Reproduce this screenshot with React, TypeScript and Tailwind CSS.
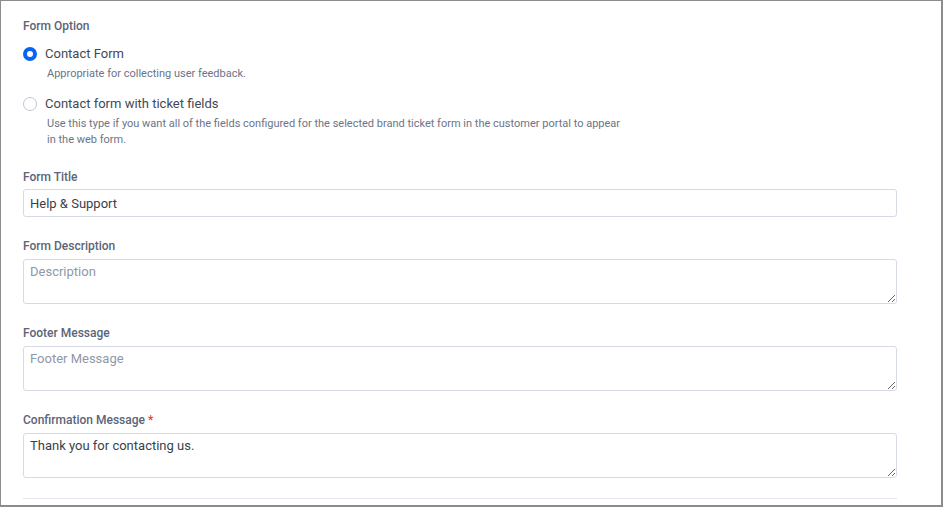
import React from "react";

const labelCls = "block text-[12px] leading-[16px] font-medium text-[#5b6478]";
const fieldCls =
  "block w-full rounded-[3px] border border-[#d5dae4] bg-white px-[6px] text-[13px] leading-[20px] text-[#3a3f4b] placeholder:text-[#8f98a8] outline-none";

function Radio({ checked }: { checked: boolean }) {
  return checked ? (
    <span className="inline-block h-[14px] w-[14px] shrink-0 rounded-full border-[4px] border-[#0b63f3] bg-white" />
  ) : (
    <span className="inline-block h-[14px] w-[14px] shrink-0 rounded-full border-[1.5px] border-[#bfc6d2] bg-white" />
  );
}

export default function App() {
  return (
    <div
      className="h-[507px] w-[943px] overflow-hidden border-t border-l border-r-2 border-b-2 border-[#8c8c8c] bg-white"
      style={{ fontFamily: "Roboto, 'Noto Sans', Arial, sans-serif" }}
    >
      <div className="w-[896px] pl-[22px] pt-[17px]">
        <div className={labelCls}>Form Option</div>

        <div className="mt-[10px]">
          <div className="flex h-[20px] items-center gap-2">
            <Radio checked />
            <span className="text-[13px] leading-[20px] text-[#434856]">Contact Form</span>
          </div>
          <p className="ml-6 mt-[2px] text-[11px] leading-[16px] text-[#6b7487]">
            Appropriate for collecting user feedback.
          </p>
        </div>

        <div className="mt-3">
          <div className="flex h-[20px] items-center gap-2">
            <Radio checked={false} />
            <span className="text-[13px] leading-[20px] text-[#434856]">
              Contact form with ticket fields
            </span>
          </div>
          <p className="ml-6 mt-[2px] w-[578px] text-[11px] leading-[16px] text-[#6b7487]">
            Use this type if you want all of the fields configured for the selected brand ticket form in the
            customer portal to appear in the web form.
          </p>
        </div>

        <div className="mt-[21px]">
          <label className={labelCls}>Form Title</label>
          <input
            className={`${fieldCls} mt-[4px] h-[28px] py-[3px]`}
            defaultValue="Help & Support"
          />
        </div>

        <div className="mt-[21px]">
          <label className={labelCls}>Form Description</label>
          <textarea
            className={`${fieldCls} mt-[5px] h-[45px] pt-[2px]`}
            placeholder="Description"
          />
        </div>

        <div className="mt-[21px]">
          <label className={labelCls}>Footer Message</label>
          <textarea
            className={`${fieldCls} mt-[5px] h-[45px] pt-[2px]`}
            placeholder="Footer Message"
          />
        </div>

        <div className="mt-[21px]">
          <label className={labelCls}>
            Confirmation Message <span className="text-[#e5403a]">*</span>
          </label>
          <textarea
            className={`${fieldCls} mt-[5px] h-[45px] pt-[2px]`}
            defaultValue="Thank you for contacting us."
          />
        </div>

        <div className="mt-5 h-px w-full bg-[#e3e7ee]" />
      </div>
    </div>
  );
}
